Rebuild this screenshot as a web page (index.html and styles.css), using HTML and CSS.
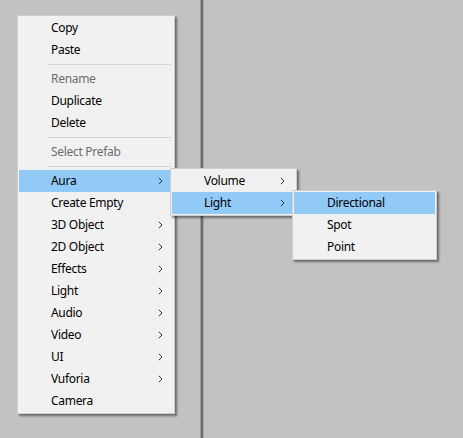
FILE: index.html
```html
<!DOCTYPE html>
<html>
<head>
<meta charset="utf-8">
<link rel="stylesheet" href="styles.css">
</head>
<body>
<div class="workspace">
  <div class="pane-left"></div>
  <div class="divider"></div>
  <div class="pane-right"></div>
</div>

<div class="menu menu-main">
  <div class="item">Copy</div>
  <div class="item">Paste</div>
  <div class="sep"></div>
  <div class="item disabled">Rename</div>
  <div class="item">Duplicate</div>
  <div class="item">Delete</div>
  <div class="sep"></div>
  <div class="item disabled">Select Prefab</div>
  <div class="sep"></div>
  <div class="item active sub">Aura<svg class="chev" viewBox="0 0 5 8"><path d="M0.8 0.8 L4 4 L0.8 7.2"/></svg></div>
  <div class="item">Create Empty</div>
  <div class="item sub">3D Object<svg class="chev" viewBox="0 0 5 8"><path d="M0.8 0.8 L4 4 L0.8 7.2"/></svg></div>
  <div class="item sub">2D Object<svg class="chev" viewBox="0 0 5 8"><path d="M0.8 0.8 L4 4 L0.8 7.2"/></svg></div>
  <div class="item sub">Effects<svg class="chev" viewBox="0 0 5 8"><path d="M0.8 0.8 L4 4 L0.8 7.2"/></svg></div>
  <div class="item sub">Light<svg class="chev" viewBox="0 0 5 8"><path d="M0.8 0.8 L4 4 L0.8 7.2"/></svg></div>
  <div class="item sub">Audio<svg class="chev" viewBox="0 0 5 8"><path d="M0.8 0.8 L4 4 L0.8 7.2"/></svg></div>
  <div class="item sub">Video<svg class="chev" viewBox="0 0 5 8"><path d="M0.8 0.8 L4 4 L0.8 7.2"/></svg></div>
  <div class="item sub">UI<svg class="chev" viewBox="0 0 5 8"><path d="M0.8 0.8 L4 4 L0.8 7.2"/></svg></div>
  <div class="item sub">Vuforia<svg class="chev" viewBox="0 0 5 8"><path d="M0.8 0.8 L4 4 L0.8 7.2"/></svg></div>
  <div class="item">Camera</div>
</div>

<div class="menu menu-aura">
  <div class="item sub">Volume<svg class="chev" viewBox="0 0 5 8"><path d="M0.8 0.8 L4 4 L0.8 7.2"/></svg></div>
  <div class="item active sub">Light<svg class="chev" viewBox="0 0 5 8"><path d="M0.8 0.8 L4 4 L0.8 7.2"/></svg></div>
</div>

<div class="menu menu-light">
  <div class="item active">Directional</div>
  <div class="item">Spot</div>
  <div class="item">Point</div>
</div>
</body>
</html>
```

FILE: styles.css
```css
html, body {
  margin: 0;
  padding: 0;
  width: 463px;
  height: 438px;
  overflow: hidden;
  background: #c2c2c2;
  font-family: "Segoe UI", "Noto Sans", "Open Sans", sans-serif;
  font-size: 12px;
  letter-spacing: -0.3px;
  color: #000;
}

.workspace {
  display: flex;
  height: 438px;
}

.pane-left {
  width: 200px;
  background: #c2c2c2;
}

.divider {
  width: 4px;
  background: #6c6c6c;
  border-left: 1px solid #9a9a9a;
  border-right: 1px solid #a8a8a8;
  box-sizing: border-box;
}

.pane-right {
  flex: 1;
  background: #c2c2c2;
}

.menu {
  position: absolute;
  background: #f1f1f1;
  border: 1px solid #cfcfcf;
  padding: 1px;
  box-shadow: 2px 2px 2px rgba(0, 0, 0, 0.45);
  box-sizing: border-box;
}

.menu-main {
  left: 17px;
  top: 15px;
  width: 158px;
  height: 399px;
}

.menu-aura {
  left: 170px;
  top: 168px;
  width: 127px;
  height: 48px;
}

.menu-light {
  left: 292px;
  top: 190px;
  width: 145px;
  height: 70px;
}

.item {
  height: 22px;
  line-height: 22px;
  padding-left: 32px;
  position: relative;
  white-space: nowrap;
}

.menu-light .item {
  padding-left: 33px;
}

.item.disabled {
  color: #6d6d6d;
}

.item.active {
  background: #91c9f7;
}

.chev {
  position: absolute;
  right: 10px;
  top: 7px;
  width: 5px;
  height: 8px;
  fill: none;
  stroke: #333;
  stroke-width: 1;
}

.sep {
  height: 7px;
  position: relative;
}

.sep::after {
  content: "";
  position: absolute;
  left: 29px;
  right: 2px;
  top: 3px;
  height: 1px;
  background: #d4d4d4;
}
```
